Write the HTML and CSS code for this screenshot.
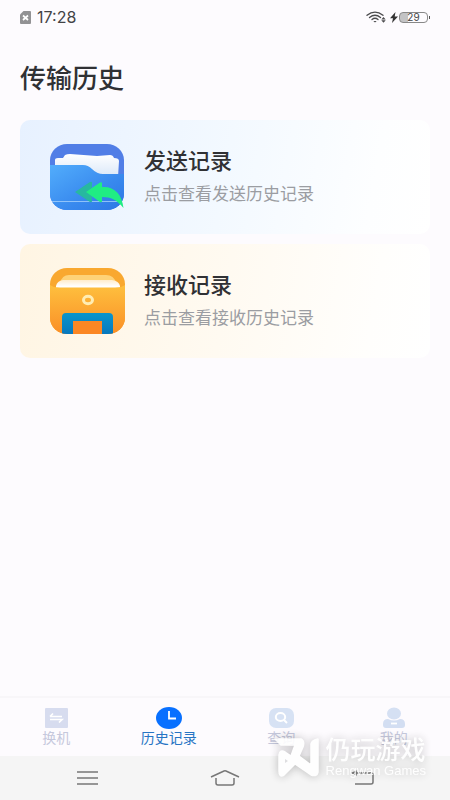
FILE: index.html
```
<!DOCTYPE html>
<html lang="zh-CN">
<head>
<meta charset="utf-8">
<meta name="viewport" content="width=device-width, initial-scale=1">
<title>传输历史</title>
<link rel="stylesheet" href="styles.css">
</head>
<body>
<div class="app">
  <header class="status">
    <svg class="status-sim" viewBox="0 0 11 13" aria-hidden="true">
      <path d="M3.500 0H10a1 1 0 0 1 1 1v11a1 1 0 0 1-1 1H1a1 1 0 0 1-1-1V3.500z" fill="#929294"/>
      <path d="M3 4.500l5 4.500M8 4.500L3 9" stroke="#fff" stroke-width="1.700"/>
    </svg>
    <time class="status-time">17:28</time>
    <svg class="status-wifi" viewBox="0 0 20 12" aria-hidden="true" fill="none" stroke="#4b4b4d" stroke-width="1.300" stroke-linecap="round">
      <path d="M1 4.300Q9 -2.200 17 4.300M3.500 6.500Q9 2 14.500 6.500M6 8.500Q9 6 12 8.500"/>
      <path d="M7.300 10h3.400L9 11.600z" fill="#4b4b4d" stroke="none"/>
      <path d="M15.300 8.500l2.200-2.500 2.200 2.500zM15.300 9.300l2.200 2.500 2.200-2.500z" fill="#4b4b4d" stroke="none"/>
    </svg>
    <svg class="status-bolt" viewBox="0 0 8 11" aria-hidden="true"><path d="M5.500 0L0 6.200h3L2 11l6-6.500H4.700z" fill="#333"/></svg>
    <span class="battery">29</span>
  </header>

  <main class="content">
    <h1 class="title">传输历史</h1>
    <a class="card card-send" href="#send">
      <svg class="card-icon" viewBox="0 0 76 67" aria-hidden="true">
        <defs>
          <linearGradient id="folder" x1="0" y1="0" x2="1" y2="1"><stop offset="0" stop-color="#52adfc"/><stop offset=".6" stop-color="#3889ee"/><stop offset="1" stop-color="#2d76e4"/></linearGradient>
          <linearGradient id="paper" x1="0" y1="0" x2="0" y2="1"><stop offset="0" stop-color="#fff"/><stop offset="1" stop-color="#d9e7f8"/></linearGradient>
          <clipPath id="send-shape"><rect width="74" height="66" rx="17" ry="16"/></clipPath>
        </defs>
        <g clip-path="url(#send-shape)">
          <rect width="74" height="66" fill="#517ee6"/>
          <path d="M5 24V16q0-2 3-2h5l2-3q2-1 5-1l27 2 13-1q3 0 4 3 5 0 5 3l-1 16H5z" fill="url(#paper)"/>
          <path d="M0 21h33q5 0 9 4 5 5 11 5h21v36H0z" fill="url(#folder)"/>
          <path d="M0 57.500h68" stroke="#a6d0fb" stroke-width=".8"/>
        </g>
        <path d="M25 48l15-10q2-1 2 1v5l-5 4 5 4v5q0 2-2 1z" fill="#27b8a0"/>
        <path d="M36 48l14-9.500q2-1 2 1V43c12-1 20 7 21.500 21C67 56 61 53 52 53v4q0 2-2 1z" fill="#20ed83"/>
      </svg>
      <span class="card-text"><strong class="card-title">发送记录</strong><span class="card-note">点击查看发送历史记录</span></span>
    </a>
    <a class="card card-receive" href="#receive">
      <svg class="card-icon" viewBox="0 0 76 67" aria-hidden="true">
        <defs>
          <linearGradient id="box" x1="0" y1="0" x2="0" y2="1"><stop offset="0" stop-color="#fec03e"/><stop offset="1" stop-color="#fa8f27"/></linearGradient>
          <linearGradient id="sheet" x1="0" y1="0" x2="0" y2="1"><stop offset="0" stop-color="#ffeccb"/><stop offset=".7" stop-color="#fff"/></linearGradient>
          <linearGradient id="tray" x1="0" y1="0" x2="0" y2="1"><stop offset="0" stop-color="#0a95cc"/><stop offset="1" stop-color="#0878bd"/></linearGradient>
          <clipPath id="receive-shape"><rect width="75" height="66" rx="17" ry="16"/></clipPath>
        </defs>
        <g clip-path="url(#receive-shape)">
          <rect width="75" height="66" fill="#f9a82f"/>
          <path d="M10 15q2-8 9-8h37q8 0 10 8z" fill="#fed277"/>
          <path d="M6 21V18q1-5 7-6h49q7 1 8 6v3z" fill="url(#sheet)"/>
          <path d="M0 17q3 2.500 10 2.500h55q7 0 10-2.500v49H0z" fill="url(#box)"/>
          <ellipse cx="38" cy="32" rx="4.500" ry="3.700" fill="none" stroke="#ffedb3" stroke-width="3"/>
          <path d="M12 66V49q0-4 4-4h43q4 0 4 4v17H52V53H23v13z" fill="url(#tray)"/>
          <path d="M23 53h29v13H23z" fill="#fb8724"/>
        </g>
      </svg>
      <span class="card-text"><strong class="card-title">接收记录</strong><span class="card-note">点击查看接收历史记录</span></span>
    </a>
  </main>

  <nav class="tabs" aria-label="主导航">
    <a class="tab" href="#switch">
      <svg class="tab-icon" viewBox="0 0 26 22" aria-hidden="true"><rect x="2" y="1" width="23" height="20" rx="1" fill="#d7dcef"/><path d="M7 9.500h12M7 9.500l3-3M7 12.500h12l-3 3" fill="none" stroke="#fff" stroke-width="1.700"/></svg>
      <span>换机</span>
    </a>
    <a class="tab tab-active" href="#history" aria-current="page">
      <svg class="tab-icon" viewBox="0 0 26 22" aria-hidden="true"><ellipse cx="13" cy="11" rx="13" ry="11" fill="#0870ff"/><path d="M13 4v7.500h7" fill="none" stroke="#fff" stroke-width="1.800"/></svg>
      <span>历史记录</span>
    </a>
    <a class="tab" href="#query">
      <svg class="tab-icon" viewBox="0 0 26 22" aria-hidden="true"><rect x="1" y="1" width="25" height="20" rx="7" fill="#d7e2f4"/><ellipse cx="12.500" cy="10" rx="4.700" ry="4" fill="none" stroke="#fff" stroke-width="2"/><path d="M16 13l3 3" stroke="#fff" stroke-width="2"/></svg>
      <span>查询</span>
    </a>
    <a class="tab" href="#me">
      <svg class="tab-icon" viewBox="0 0 26 22" aria-hidden="true"><ellipse cx="13" cy="6.500" rx="7" ry="6" fill="#d5e0f3"/><path d="M2 17q0-5 5-5 6 3 12 0 5 0 5 5v1q0 3-3 3H5q-3 0-3-3z" fill="#d3def2"/><path d="M10 16.500h6" stroke="#fff" stroke-width="1.800"/></svg>
      <span>我的</span>
    </a>
  </nav>

  <footer class="system">
    <button class="system-key" type="button" aria-label="菜单"><svg viewBox="0 0 30 20" aria-hidden="true"><path d="M5 4h21M5 10h21M5 16h21"/></svg></button>
    <button class="system-key" type="button" aria-label="主页"><svg viewBox="0 0 30 20" aria-hidden="true"><path d="M1 9L14 3q1-.4 2 0L29 9M6 10v5q0 2 2 2h14q2 0 2-2v-5"/></svg></button>
    <button class="system-key" type="button" aria-label="返回"><svg viewBox="0 0 30 20" aria-hidden="true"><path d="M5 5h18q2 0 2 2v7q0 2-2 2H7"/><path d="M8 3.500L4.500 5 8 6.500z" fill="#777"/></svg></button>
  </footer>

  <div class="watermark">
    <svg class="watermark-logo" viewBox="0 0 46 40" aria-hidden="true">
      <path d="M1 1H27Q31 3 29 9L25 18 37 27V6Q38 2 44 1V34Q43 39 37 37L21 26 10 37Q5 40 5 33V17Q6 11 11 14L17 18 21 7H7z" fill="#fff" stroke="#fff" stroke-width="1.500" stroke-linejoin="round"/>
      <path d="M11 21l3 2-3 2z" fill="#dcdcde"/>
    </svg>
    <span class="watermark-text"><span class="watermark-name">仍玩游戏</span><span class="watermark-sub">Rengwan Games</span></span>
  </div>
</div>
</body>
</html>
```
FILE: styles.css
```
* { box-sizing: border-box; }

body {
  margin: 0;
  background: #fdfbfe;
  color: #303134;
  font-family: "Noto Sans", "Noto Sans CJK SC", sans-serif;
}

a { color: inherit; text-decoration: none; }

.app {
  position: relative;
  display: flex;
  flex-direction: column;
  min-height: 100vh;
}

.status {
  display: flex;
  align-items: center;
  height: 34px;
  padding: 0 22px 0 20px;
}

.status-sim { width: 11px; height: 13px; }

.status-time {
  margin-left: 6px;
  margin-right: auto;
  color: #434345;
  font-family: Inter, sans-serif;
  font-size: 16px;
}

.status-wifi { width: 20px; height: 12px; }
.status-bolt { width: 8px; height: 11px; margin: 0 1px 0 4px; }

.battery {
  position: relative;
  width: 29px;
  height: 11px;
  border: 1px solid #888;
  border-radius: 4px;
  background: linear-gradient(90deg, #c3c3c5 30%, transparent 30%);
  color: #444;
  font: 10px/9px Inter, sans-serif;
  text-align: center;
}

.battery::after {
  content: "";
  position: absolute;
  top: 3px;
  right: -3px;
  width: 1px;
  height: 3px;
  background: #555;
}

.content {
  display: flex;
  flex: 1;
  flex-direction: column;
  gap: 10px;
  padding: 24px 20px;
}

.title {
  margin: 0 0 12px;
  font-size: 26px;
  font-weight: 500;
  line-height: 40px;
}

.card {
  display: flex;
  align-items: center;
  gap: 18px;
  min-height: 114px;
  padding: 0 30px;
  border-radius: 10px;
}

.card-send { background: linear-gradient(100deg, #e7f1ff, #f3f9ff 50%, #fdfeff 85%, #fff); }
.card-receive { background: linear-gradient(100deg, #fff5e3, #fffaf1 50%, #fffefc 85%, #fff); }

.card-icon { flex: none; width: 76px; height: 67px; }

.card-text { display: flex; flex-direction: column; gap: 6px; }
.card-title { font-size: 22px; font-weight: 500; line-height: 28px; }
.card-note { color: #9b9da2; font-size: 17px; line-height: 28px; }

.tabs {
  display: grid;
  grid-template-columns: repeat(4, 1fr);
  height: 60px;
  border-top: 2px solid #f8f6f9;
}

.tab {
  display: flex;
  flex-direction: column;
  align-items: center;
  padding-top: 9px;
  color: #c5c8dc;
  font-size: 14px;
  line-height: 18px;
}

.tab-active { color: #2775c4; }
.tab-icon { width: 26px; height: 22px; }

.system {
  display: flex;
  align-items: center;
  justify-content: space-between;
  height: 44px;
  padding: 0 72px;
  background: #f5f5f5;
}

.system-key {
  display: flex;
  padding: 0;
  border: 0;
  background: none;
}

.system-key svg {
  width: 30px;
  height: 20px;
  fill: none;
  stroke: #777;
  stroke-width: 1.5;
}

.watermark {
  position: absolute;
  right: 24px;
  bottom: 20px;
  display: flex;
  align-items: center;
  gap: 6px;
  color: #fff;
  filter: drop-shadow(0 0 5px #0004);
  opacity: 0.9;
  pointer-events: none;
}

.watermark-logo { width: 46px; height: 40px; }
.watermark-text { display: flex; flex-direction: column; }
.watermark-name { font-size: 25px; font-weight: 500; line-height: 26px; }
.watermark-sub { font: 13px/18px "Liberation Sans", sans-serif; }
```
